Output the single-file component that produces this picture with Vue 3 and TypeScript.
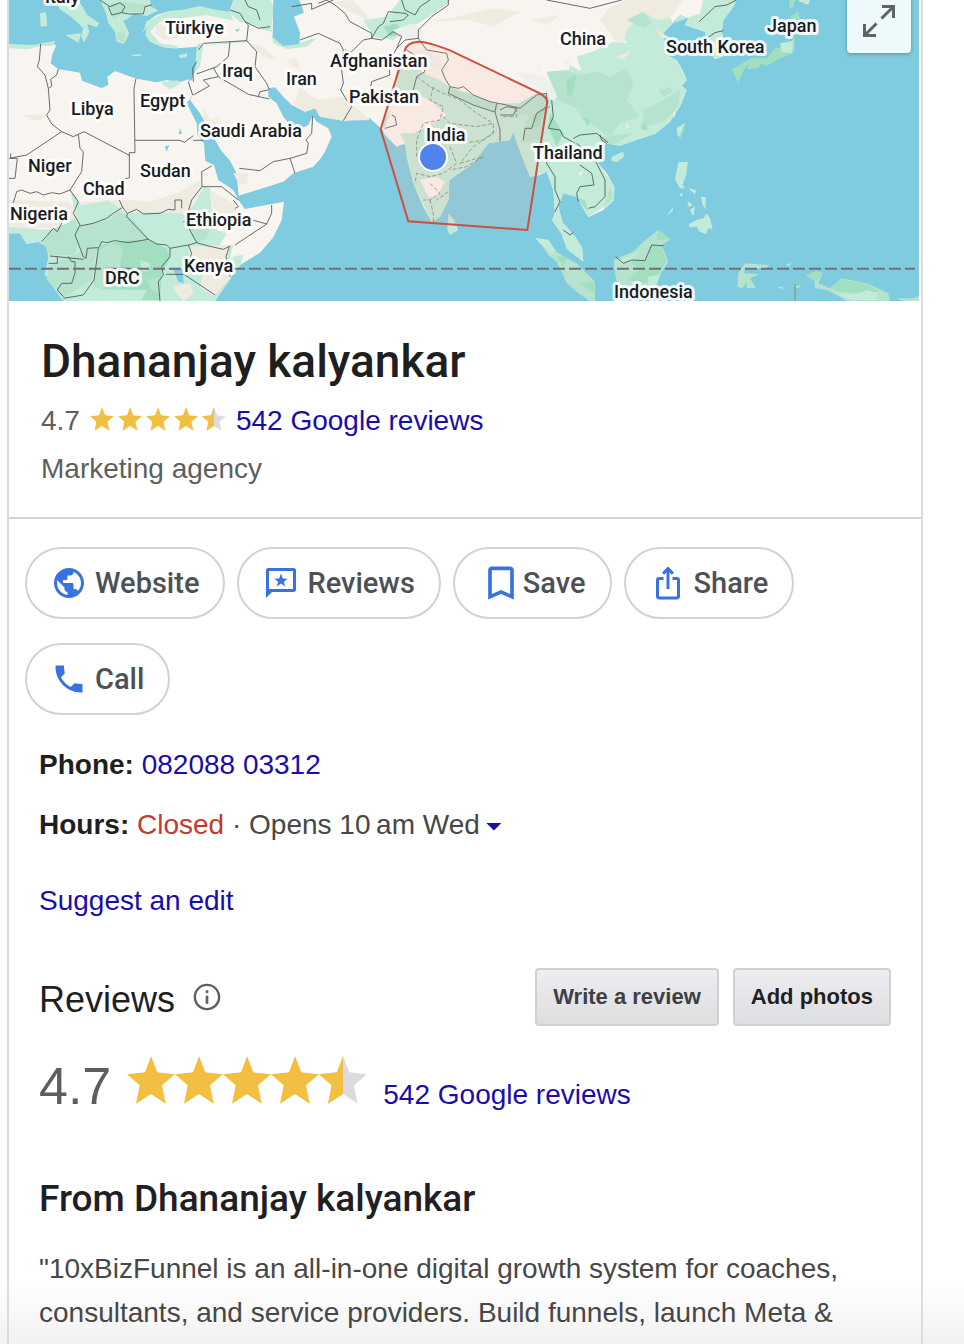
<script setup lang="ts">
import { ref } from 'vue'

interface MapLabel {
  name: string
  x: number
  y: number
}

interface Action {
  id: string
  label: string
  wide?: boolean
}

const labels: MapLabel[] = [
  { name: 'Italy', x: 45, y: 3 },
  { name: 'Türkiye', x: 165, y: 34 },
  { name: 'Iraq', x: 222, y: 77 },
  { name: 'Iran', x: 286, y: 85 },
  { name: 'Libya', x: 71, y: 115 },
  { name: 'Egypt', x: 140, y: 107 },
  { name: 'Saudi Arabia', x: 200, y: 137 },
  { name: 'Niger', x: 28, y: 172 },
  { name: 'Sudan', x: 140, y: 177 },
  { name: 'Chad', x: 83, y: 195 },
  { name: 'Nigeria', x: 10, y: 220 },
  { name: 'Ethiopia', x: 186, y: 226 },
  { name: 'Kenya', x: 184, y: 272 },
  { name: 'DRC', x: 105, y: 284 },
  { name: 'Afghanistan', x: 330, y: 67 },
  { name: 'Pakistan', x: 349, y: 103 },
  { name: 'China', x: 560, y: 45 },
  { name: 'India', x: 426, y: 141 },
  { name: 'Thailand', x: 533, y: 159 },
  { name: 'South Korea', x: 666, y: 53 },
  { name: 'Japan', x: 767, y: 32 },
  { name: 'Indonesia', x: 614, y: 298 },
]

const actions: Action[] = [
  { id: 'website', label: 'Website' },
  { id: 'reviews', label: 'Reviews' },
  { id: 'save', label: 'Save', wide: true },
  { id: 'share', label: 'Share' },
  { id: 'call', label: 'Call' },
]

const star = 'M72 0L91 49L144 55L105 88L116 143L72 114L27 143L38 88L0 55L54 49Z'
const halfStar = 'M72 0V114L27 143L38 88L0 55L54 49Z'
const hoursOpen = ref(false)
</script>

<template>
  <main class="page">
    <article class="card">
      <div class="map">
        <svg class="map-art" viewBox="9 0 910 301" preserveAspectRatio="xMinYMin slice" role="img" aria-label="Map of the service area">
          <rect class="sea" x="9" y="0" width="2000" height="301" />
          <g transform="scale(.33333)">
            <!-- Europe -->
            <path class="green" d="M120 40L138 36 142 78 122 80ZM165 0H235L262 45 298 70 290 82 262 72 268 95 252 128 243 108 250 85 215 52 180 28ZM195 105L243 100 236 128ZM300 0H450L455 20 478 30 440 48 400 42 385 55 370 62 388 100 372 132 350 125 345 95 325 70 318 40Z" />
            <path class="mid" d="M330 10L375 5 440 15 420 38 370 35 340 60ZM350 95L375 98 372 128 352 118Z" />

            <!-- Africa -->
            <path class="land" d="M27 140L85 145 122 132 158 126 168 138 158 160 152 190 175 207 240 218 246 242 305 264 325 255 322 230 345 213 380 226 410 236 470 247 500 240 540 246 566 238 570 262 578 285 560 310 590 370 592 405 612 430 616 482 642 495 655 540 700 570 715 600 735 627 852 605 845 660 820 712 780 758 720 795 690 835 645 903H190L160 862 135 822 146 772 140 740 115 725 80 732 60 700H27Z" />
            <path class="green" d="M27 132L100 135 165 122 160 138 120 138 85 148 27 145ZM483 245L535 241 540 252 512 268 490 256ZM210 570L245 615 325 600 380 640 540 630 555 650 590 600 610 560 630 565 635 625 650 690 680 700 660 735 700 735 690 770 715 790 690 840 645 903H190L160 862 135 822 146 772 140 740 115 725 80 732 60 700H27V680L150 690 200 680 225 635Z" />
            <path class="sand" d="M27 600L200 605 230 625 225 655 150 685 27 680ZM245 605L380 600 450 605 540 575 600 540 608 570 560 640 380 635 325 602 245 615ZM70 345L105 345 140 340 125 360 95 360ZM565 740L690 735 680 780 720 760 690 835 640 890 600 860 610 810 575 820ZM630 570L700 610 715 640 670 700 645 650ZM520 860L570 850 580 880 550 903 530 880Z" />
            <path class="mid" d="M240 680L330 660 355 635 395 655 450 720 385 720 310 725 250 770 225 710ZM150 690L225 660 240 700 225 765 150 765 130 730ZM200 770L290 745 275 840 190 895 140 840 145 800ZM550 650L600 640 640 665 620 715 590 730Z" />
            <path class="deep" d="M300 735L390 720 450 722 500 745 510 775 485 820 480 900H425L440 870 300 868 285 800Z" />
            <path class="mid" d="M295 750L335 730 370 745 360 800 310 870 280 860ZM440 840L480 830 480 880 455 870Z" />
            <path class="green" d="M420 780L450 790 445 815 425 812ZM700 770L730 765 720 800 700 800Z" />
            <path class="sea" d="M520 808H550V850L535 845ZM495 440L508 435 500 455ZM540 385L546 402H536ZM370 838L378 845 372 856Z" />

            <!-- Asia -->
            <path class="land" d="M700 0L690 30 640 22 600 15 545 30 500 35 470 45 440 65 430 95 450 125 490 142 530 145 590 140 600 130 590 165 590 200 575 240 565 245 578 285 570 300 600 340 640 410 662 450 690 482 710 520 716 587 740 580 850 545 880 520 940 500 960 478 975 455 995 410 985 385 950 365 938 348 925 375 905 385 870 375 850 350 830 310 805 290 805 265 825 262 850 290 875 315 915 335 945 325 960 350 1030 362 1110 355 1142 385 1160 405 1190 440 1220 420 1220 470 1240 550 1270 620 1295 665 1320 650 1345 600 1348 540 1420 490 1465 430 1530 420 1540 395 1555 440 1590 530 1620 525 1640 515 1660 570 1665 640 1656 660 1684 700 1702 748 1750 785 1746 742 1724 708 1688 668 1675 620 1690 580 1730 590 1765 652 1810 630 1842 600 1843 560 1820 520 1795 490 1790 455 1820 430 1860 437 1900 420 1965 402 2010 365 2040 320 2060 270 2045 257 2060 240 2050 215 2030 180 2000 165 1990 100 2040 45 2065 55 2055 75 2115 95 2125 150 2145 178 2180 165 2175 130 2165 95 2170 60 2200 20 2210 0Z" />
            <path class="green" d="M700 0H812L825 30 815 65 815 95 790 90 750 70 720 65 690 40ZM430 95L440 65 500 35 600 15 690 30 700 62 620 45 540 55 480 65 450 95 480 130 535 138 530 146 490 142 450 125ZM590 140L740 120 745 125 610 138 600 200 585 215ZM815 105L850 130 890 132 925 120 950 115 920 140 860 148 820 130Z" />
            <path class="green" d="M1090 60L1160 50 1200 0H1350L1345 10 1280 55 1220 90 1180 120 1120 110ZM1190 210L1230 175 1270 220 1320 240 1360 270 1450 310 1560 310 1620 300 1650 285 1660 235 1700 230 1710 195 1745 215 1730 170 1790 150 1840 125 1880 130 1850 70 1890 50 1990 20 2020 70 1990 100 2000 165 2030 180 2060 240 2045 257 2060 270 2040 320 2010 365 1965 402 1860 437 1820 430 1790 455 1795 490 1843 560 1842 600 1765 652 1730 590 1690 580 1675 620 1688 668 1724 708 1746 742 1750 785 1702 748 1684 700 1656 660 1665 640 1660 570 1640 515 1590 530 1555 440 1540 395 1530 420 1465 430 1420 490 1348 540 1345 600 1320 650 1295 665 1240 550 1220 470 1215 435 1160 405 1145 370 1190 300Z" />
            <path class="green" d="M2020 70L2100 40 2110 0H2210L2200 20 2170 60 2165 95 2180 165 2145 178 2125 150 2115 95 2055 75 2065 55 2040 45Z" />
            <path class="land" d="M1180 305L1260 285 1300 310 1340 345 1300 370 1240 400 1200 400 1215 430 1190 440 1150 400ZM1260 540L1310 530 1335 545 1310 590 1285 590Z" />
            <path class="sand" d="M745 130L790 140 830 180 790 170ZM860 180L890 175 900 210 880 200ZM900 260L950 300 1030 290 1110 360 1030 362 960 350 945 325 915 335 880 315ZM610 320L630 360 660 350 650 375 680 400 615 400ZM700 520L745 520 740 555 715 550ZM1290 65L1400 60 1480 80 1560 35 1480 25 1350 55ZM1590 60L1680 45 1640 75ZM470 75L520 60 560 75 530 115 490 120 465 100ZM1800 60L1830 20 1880 0H2050L2010 55 1970 60 1930 35 1880 90 1870 130 1850 125ZM1968 88L2015 118 1985 112ZM1850 170L1895 150 1870 178ZM1000 5L1060 0 1120 70 1060 40Z" />
            <path class="mid" d="M1640 215L1700 210 1740 225 1790 215 1830 230 1880 205 1900 250 1880 300 1920 350 1860 370 1830 410 1770 370 1720 320 1670 300ZM1930 330L1990 300 2040 270 2035 320 1990 365 1920 385 1930 355ZM1975 270L2010 262 2018 275 1990 290ZM1600 300L1640 290 1640 330 1620 420 1560 430 1580 360ZM1790 410L1900 400 1840 435 1800 420ZM1830 560L1842 590 1810 630ZM1880 60L1930 35 1955 70 1930 85ZM1350 262L1420 285 1500 315 1490 338 1420 315 1345 280ZM1540 320L1610 280 1655 285 1640 320 1580 345 1540 345Z" />
            <path class="deep" d="M1600 345L1635 325 1620 375 1598 385ZM1650 340L1690 400 1670 440 1645 380ZM1700 240L1730 225 1715 290 1700 285ZM1925 375L1940 370 1942 390 1925 388ZM1150 80L1190 70 1210 100 1170 110ZM1730 595L1755 600 1765 635ZM1745 350L1770 360 1765 380Z" />
            <path class="snow" d="M1180 90L1240 70 1275 95 1260 120 1200 115ZM1550 215L1600 222 1650 240 1672 290 1655 305 1630 270 1580 245ZM1200 140L1280 150 1325 180 1320 210 1280 190ZM1610 190L1625 205 1615 210ZM1690 180L1710 170 1700 200ZM1735 520L1750 510 1740 530ZM1880 370L1888 380 1880 388ZM2020 340L2026 335 2024 355Z" />
            <path class="sea" d="M820 0H898L912 38 882 50 900 98 898 132 850 138 818 112ZM455 0H690L688 35 640 28 600 18 545 30 478 34 452 18ZM705 90L720 85 712 96ZM440 80L428 100 435 112Z" />

            <!-- Islands -->
            <path class="green" d="M1345 640L1362 660 1375 690 1350 705 1342 690ZM390 164L425 163 420 168 400 168ZM536 166L562 160 560 172 540 174ZM1835 470L1870 455 1872 470 1850 487 1835 482ZM2030 385L2055 368 2042 415 2032 405ZM2035 487L2063 485 2060 520 2048 555 2055 565 2040 565 2025 540ZM2065 565L2088 570 2085 583ZM2103 590L2118 592 2116 628 2108 615ZM2062 603L2078 614 2066 622ZM2070 630L2085 618 2080 650ZM2038 580L2050 582 2044 592ZM2067 672L2090 660 2110 655 2120 640 2130 655 2138 687 2125 685 2118 702 2098 695 2090 680 2068 682ZM1998 650L2020 620 2018 632ZM2395 0H2430L2425 14 2400 5Z" />
            <path class="deep" d="M2368 0H2385L2378 25 2368 22ZM2370 50L2395 35 2400 60 2385 75ZM2385 110L2360 140 2325 145 2300 175 2250 175 2210 200 2195 208 2215 248 2232 208 2250 190 2240 208 2275 205 2285 190 2300 198 2330 180 2365 165 2382 155ZM2055 370L2042 415 2036 412Z" />
            <path class="green" d="M2340 130L2380 122 2375 160 2345 155Z" />
            <path class="mid" d="M1605 713L1645 720 1670 755 1700 775 1730 790 1785 845V903H1770L1735 880 1700 850 1685 815 1670 785 1645 765 1625 735ZM1841 780L1900 755 1925 730 1975 690 2012 718 1985 735 2005 785 1985 815 1965 870 1855 865 1845 820ZM2215 820L2235 790 2305 795 2312 787 2300 805 2235 805 2232 820 2278 823 2250 835 2268 865H2240L2240 845 2228 865 2212 860ZM2418 825L2450 813 2468 820 2455 850 2490 865 2525 835 2600 850 2665 880 2670 903H2540L2510 885 2480 870 2445 865 2445 845ZM2690 895L2740 895 2775 880 2765 903H2710ZM2358 795L2374 787 2368 800ZM2330 862L2350 860 2348 868ZM2375 858L2405 856 2395 864ZM1885 835L1894 850 1888 855Z" />
            <path class="deep" d="M1890 785L1940 780 1955 735 1985 740 1998 785 1960 850 1880 840 1920 810ZM1975 690L2012 718 1970 720ZM2490 862L2525 838 2600 852 2640 875 2590 880 2520 875ZM2420 825L2450 815 2466 822 2450 845ZM1670 765L1700 775 1690 800ZM1740 850L1785 845 1780 880Z" />
            <path class="green" d="M1605 713L1645 720 1665 750 1660 765 1625 735ZM1845 785L1890 770 1920 750 1885 785ZM2500 880L2570 882 2600 870 2630 880 2630 900H2560ZM1945 830L1978 825 1965 865 1945 860Z" />

            <!-- Borders -->
            <path class="border" d="M122 132L118 180 112 200 135 225 145 265 150 330 140 345 155 372 185 395 80 465 27 475M175 207L170 225 152 238 155 258 146 265M185 395L220 410 235 403 252 395 390 467M235 403L240 445 250 455 245 515 210 570M408 236L402 265 405 458H388V533L365 540M405 421H540L553 427 580 407M580 421H610M32 460V475H52L45 535H27M40 608L50 575 65 570 90 580 110 575 130 585 155 578 180 582 210 570L235 605 220 640 240 675 225 705 250 770 258 775 262 745 295 743M358 600L368 622 340 640 320 655 280 670 240 678M368 622L382 640 380 650 445 718 385 728 345 722 320 728 305 725 295 745 282 840 250 885 190 895M382 640L410 628 430 642 480 640 505 628 525 630V600H545V625M550 665H556L590 728 625 738 670 748 690 738M606 560L575 600 560 650M606 560L605 515 635 498M606 560L665 560 715 600M700 600L715 620 705 625M445 718L470 732 500 735 510 745 565 735 590 728M565 735L575 760 560 800M510 745V770L485 800 490 825 475 845 480 903M497 823H552L645 885M688 740L678 770 690 830M125 725L160 685 172 695 190 660M150 768L250 778M146 790H172V768M205 770L215 785 225 785 225 820 215 850 185 850 172 870 190 890M757 660L800 672 815 640V615M705 735L800 672M595 150L610 130 740 122 770 155 765 200 800 250 808 270M690 125L685 170 650 200 590 222M640 203L655 230 745 283 808 297M655 230L610 240 628 258 580 285M590 185L578 205 580 245M565 245L578 285M775 290L780 275 805 270M718 505L780 512 820 485 870 475 920 460 925 430 918 420 935 400 938 348M870 475L885 520M735 65L745 75 740 122M735 65L775 85 810 80M690 30L720 40 735 65M325 20L335 45 365 38 388 42 430 42 435 20 455 15M300 0L330 20 360 8 375 20 365 38M875 20L935 10 935 28 1000 0M735 0L745 20 770 30 780 60M900 120L955 100 1020 130 1030 150 1025 210 1030 250 1022 270 1040 300 1055 320 1030 362M1035 150L1055 155 1090 120 1115 115 1135 80 1150 70 1165 35 1215 40 1225 45 1210 60 1170 65M955 10L980 0 1005 15 1035 40 1050 65 1115 100V115L1145 120 1180 95 1205 110 1190 145 1215 120 1255 115 1255 90 1295 50 1345 15 1345 0M1205 0L1215 30 1245 45 1260 20 1290 0M1190 145L1165 190 1170 225 1115 245 1110 270M1220 150L1260 175 1275 215 1250 230 1240 270M1255 115L1280 150 1340 160 1345 180 1325 210 1335 235 1350 260 1375 265 1390 260 1420 285 1470 305 1520 315 1560 325 1610 285 1640 280M1350 260L1345 280 1420 315 1480 335H1485L1490 310M1500 330L1520 320 1550 325 1540 345 1500 345M1640 280V320L1610 340 1595 385 1575 385 1570 420M1155 385L1190 375 1185 350 1175 345M1485 335L1500 390V425M1655 300L1660 350 1645 385 1680 390 1690 410 1725 430M1720 415L1740 405 1790 400 1825 428M1640 460L1640 490 1665 530 1665 570 1680 605 1665 635M1730 430L1765 460 1790 490 1815 540 1815 590 1785 620 1765 625M1740 495L1775 520 1782 555 1740 560 1730 580 1735 605M1690 690L1710 705 1720 698M1640 0L1770 25 1865 0M1800 405L1805 420 1820 430M2098 65L2145 20 2180 15 2210 0M2125 112L2145 98 2170 92M1847 770L1870 790 1895 780 1935 782 1955 735 1990 737" />
            <path class="state" d="M1250 230L1290 260 1330 280 1380 300 1430 340 1480 370M1300 260L1290 300 1330 320 1320 360 1270 370 1250 420 1250 470M1330 350L1350 370 1430 380 1480 370 1480 400 1420 440 1380 490M1350 440L1370 490 1330 520 1290 530 1250 520 1245 550M1390 430L1450 420 1490 390M1290 550L1320 580 1290 600 1270 600M1290 600L1300 640V665M1345 575L1310 600M1380 490L1450 470 1400 500 1350 510M1510 350H1550L1550 330M1610 340L1650 320" />
            <path class="meridian" d="M2385 853V903" />
            <path class="equator" d="M27 806H2745" />

            <path class="area" d="M1142 388L1213 155Q1218 128 1255 125 1280 124 1350 151L1620 280Q1640 292 1642 305L1582 690 1225 664Z" />
          </g>
          <circle class="pin" cx="433" cy="157" r="14" />
          <text v-for="label in labels" :key="label.name" class="map-label" :x="label.x" :y="label.y">{{ label.name }}</text>
        </svg>
        <button class="expand" type="button" aria-label="Expand map">
          <svg viewBox="0 0 32 32" aria-hidden="true">
            <path d="M19 1.5H30.500V13M29.500 2.500L18.500 13.500M1.500 19V30.500H13M2.500 29.500L13.500 18.500" />
          </svg>
        </button>
      </div>

      <header class="summary">
        <h1>Dhananjay kalyankar</h1>
        <div class="rating">
          <span>4.7</span>
          <span class="stars small" role="img" aria-label="4.7 out of 5 stars">
            <svg v-for="n in 5" :key="n" viewBox="0 0 144 144" aria-hidden="true">
              <path :d="star" :class="n < 5 ? 'gold' : 'empty'" />
              <path v-if="n === 5" :d="halfStar" class="gold" />
            </svg>
          </span>
          <a href="#reviews">542 Google reviews</a>
        </div>
        <p class="category">Marketing agency</p>
      </header>

      <div class="actions">
        <button v-for="action in actions" :key="action.id" class="chip" :class="{ flush: action.wide }" type="button">
          <svg v-if="action.id === 'website'" viewBox="0 0 24 24" aria-hidden="true">
            <path d="M12 2C6.480 2 2 6.480 2 12s4.480 10 10 10 10-4.480 10-10S17.520 2 12 2zm-1 17.930c-3.950-.49-7-3.850-7-7.930 0-.62.080-1.210.21-1.790L9 15v1c0 1.100.9 2 2 2v1.930zm6.900-2.540c-.26-.81-1-1.390-1.900-1.390h-1v-3c0-.55-.45-1-1-1H8v-2h2c.55 0 1-.45 1-1V7h2c1.100 0 2-.9 2-2v-.41c2.930 1.190 5 4.060 5 7.410 0 2.080-.8 3.970-2.100 5.390z" />
          </svg>
          <svg v-else-if="action.id === 'reviews'" viewBox="0 0 24 24" aria-hidden="true">
            <path fill-rule="evenodd" d="M20.500 2h-17C2.700 2 2 2.700 2 3.500V22l4-4h14.500c.8 0 1.500-.7 1.500-1.500v-13c0-.8-.7-1.500-1.500-1.500zM20 16H4V4h16v12z" />
            <path d="M12 5.700l1.200 3.300 3.200.1-2.500 2 .9 3.200-2.800-1.900-2.800 1.900.9-3.200-2.500-2 3.200-.1z" />
          </svg>
          <svg v-else-if="action.id === 'save'" viewBox="0 0 24 24" aria-hidden="true">
            <path d="M17 3H7c-1.100 0-2 .9-2 2v16l7-3 7 3V5c0-1.100-.9-2-2-2zm0 15l-5-2.180L7 18V5h10v13z" />
          </svg>
          <svg v-else-if="action.id === 'share'" viewBox="0 0 24 24" aria-hidden="true">
            <path d="M16 5l-1.420 1.420-1.590-1.590V16h-1.980V4.830L9.420 6.420 8 5l4-4 4 4zm4 5v11c0 1.100-.9 2-2 2H6c-1.110 0-2-.9-2-2V10c0-1.110.89-2 2-2h3v2H6v11h12V10h-3V8h3c1.100 0 2 .89 2 2z" />
          </svg>
          <svg v-else viewBox="0 0 24 24" aria-hidden="true">
            <path d="M21 15.460l-5.270-.61-2.520 2.520c-2.830-1.440-5.150-3.750-6.590-6.590l2.530-2.530L8.540 3H3.030C2.450 13.180 10.820 21.550 21 20.970v-5.510z" />
          </svg>
          <span>{{ action.label }}</span>
        </button>
      </div>

      <section class="details">
        <p><strong>Phone:</strong> <a href="tel:08208803312">082088 03312</a></p>
        <p><strong>Hours:</strong> <span class="closed">Closed</span> · Opens 10&#8239;am Wed<button class="caret" type="button" aria-label="Show opening hours" :aria-expanded="hoursOpen" @click="hoursOpen = !hoursOpen"></button></p>
        <p class="suggest"><a href="#edit">Suggest an edit</a></p>
      </section>

      <section id="reviews" class="reviews">
        <div class="reviews-head">
          <h2>Reviews</h2>
          <button class="info" type="button" aria-label="About reviews">
            <svg viewBox="0 0 24 24" aria-hidden="true">
              <path d="M11 7h2v2h-2zm0 4h2v6h-2zm1-9C6.480 2 2 6.480 2 12s4.480 10 10 10 10-4.480 10-10S17.520 2 12 2zm0 18.200c-4.520 0-8.200-3.680-8.200-8.200S7.480 3.800 12 3.800s8.200 3.680 8.200 8.200-3.680 8.200-8.200 8.200z" />
            </svg>
          </button>
          <div class="review-buttons">
            <button class="box-button muted" type="button">Write a review</button>
            <button class="box-button" type="button">Add photos</button>
          </div>
        </div>
        <div class="score">
          <span class="score-value">4.7</span>
          <span class="stars large" role="img" aria-label="4.7 out of 5 stars">
            <svg v-for="n in 5" :key="n" viewBox="0 0 144 144" aria-hidden="true">
              <path :d="star" :class="n < 5 ? 'gold' : 'empty'" />
              <path v-if="n === 5" :d="halfStar" class="gold" />
            </svg>
          </span>
          <a href="#all-reviews">542 Google reviews</a>
        </div>
      </section>

      <section class="about">
        <h2>From Dhananjay kalyankar</h2>
        <p>"10xBizFunnel is an all-in-one digital growth system for coaches, consultants, and service providers. Build funnels, launch Meta &amp;</p>
      </section>
    </article>
  </main>
</template>

<style>
body {
  margin: 0;
  background: #fff;
}
</style>

<style scoped>
.page {
  box-sizing: border-box;
  min-height: 100vh;
  display: flex;
  padding: 0 41px 0 7px;
  background: linear-gradient(to top, #f1f1f1, #fff 64px);
  color: #474747;
  font: 28px/44px "Liberation Sans", Arial, sans-serif;
}

.card {
  flex: 1;
  min-width: 0;
  border: solid #dadce0;
  border-width: 0 2px;
}

h1,
h2,
p {
  margin: 0;
}

a {
  color: #1a0dab;
  text-decoration: none;
}

button {
  font: inherit;
  cursor: pointer;
}

.map {
  position: relative;
  height: 301px;
  margin-right: 2px;
  overflow: hidden;
}

.map-art {
  display: block;
  width: 100%;
  height: 100%;
}

.sea { fill: #7fcce0; }
.land { fill: #f8f4ef; }
.sand { fill: #f0ebe1; }
.green { fill: #c3ebd9; }
.mid { fill: #b5e3ce; }
.deep { fill: #a1dfc0; }
.snow { fill: #eef0ef; }

.border,
.state,
.meridian,
.equator {
  fill: none;
  stroke: #4b5054;
  stroke-width: 2.500;
}

.state {
  stroke: #7b8581;
  stroke-dasharray: 12 6;
}

.meridian {
  stroke: #7fa898;
  stroke-width: 5;
}

.equator {
  stroke: #756d78;
  stroke-width: 6;
  stroke-dasharray: 36 12;
}

.area {
  fill: #ffaca0;
  fill-opacity: 0.15;
  stroke: #cb4f42;
  stroke-width: 6;
}

.pin {
  fill: #5083ec;
  stroke: #fff;
  stroke-width: 2;
}

.map-label {
  fill: #1b1c1f;
  stroke: #fff;
  stroke-opacity: 0.85;
  stroke-width: 6px;
  stroke-linejoin: round;
  paint-order: stroke;
  font: 500 18px Roboto, sans-serif;
}

.expand {
  position: absolute;
  top: -11px;
  right: 8px;
  width: 64px;
  height: 64px;
  padding: 16px;
  border: 0;
  border-radius: 4px;
  background: #eef9fb;
  box-shadow: 0 1px 4px rgba(0, 0, 0, 0.3);
}

.expand svg {
  display: block;
  fill: none;
  stroke: #5f6365;
  stroke-width: 3;
}

.summary {
  padding: 32px 32px 24px;
  border-bottom: 2px solid #d2d2d2;
  color: #5e5e5e;
}

.summary h1 {
  color: #1f1f1f;
  font: 500 46px/56px "Google Sans", Roboto, sans-serif;
}

.rating {
  display: flex;
  align-items: center;
  gap: 10px;
  height: 48px;
  margin-top: 8px;
}

.category {
  line-height: 48px;
}

.stars {
  display: flex;
}

.stars.small {
  gap: 4px;
  padding-bottom: 4px;
}

.stars svg {
  display: block;
  width: 24px;
  height: 24px;
}

.gold { fill: #f2bf42; }
.empty { fill: #dadce0; }

.actions {
  display: flex;
  flex-wrap: wrap;
  gap: 24px 12px;
  padding: 28px 16px 0;
}

.chip {
  display: flex;
  align-items: center;
  gap: 8px;
  height: 72px;
  padding: 0 24px;
  border: 2px solid #d2d2d2;
  border-radius: 36px;
  background: #fff;
  color: #4d5156;
  font: 500 29px/40px "Google Sans", Roboto, sans-serif;
}

.chip svg {
  width: 36px;
  height: 36px;
  fill: #3871e0;
}

.chip.flush {
  gap: 0;
}

.chip.flush svg {
  width: 44px;
  height: 44px;
}

.details {
  padding: 20px 30px 0;
  line-height: 60px;
}

.details strong {
  color: #1f1f1f;
}

.closed {
  color: #c5392e;
}

.caret {
  width: 16px;
  height: 8px;
  margin-left: 6px;
  padding: 0;
  border: 0;
  background: #1a0dab;
  clip-path: polygon(0 0, 100% 0, 50% 100%);
  vertical-align: middle;
}

.suggest {
  margin-top: 16px;
}

.reviews {
  padding: 37px 30px 0;
}

.reviews-head {
  display: flex;
  align-items: center;
}

.reviews h2 {
  padding-top: 6px;
  color: #1f1f1f;
  font-size: 36px;
  font-weight: 400;
}

.info {
  margin-left: 16px;
  padding: 0;
  border: 0;
  background: none;
}

.info svg {
  display: block;
  width: 32px;
  height: 32px;
  fill: #5e5e5e;
}

.review-buttons {
  display: flex;
  gap: 14px;
  margin-left: auto;
}

.box-button {
  height: 58px;
  padding: 0 16px;
  border: 2px solid #d0d0d0;
  border-radius: 4px;
  background: linear-gradient(#eeedf2, #dddee0);
  color: #1f1f1f;
  font-size: 22px;
  font-weight: 700;
}

.box-button.muted {
  color: #3c4043;
}

.score {
  display: flex;
  align-items: baseline;
  gap: 16px;
  margin-top: 30px;
}

.score-value {
  color: #5e5e5e;
  font-size: 52px;
  line-height: 60px;
}

.stars.large svg {
  width: 48px;
  height: 48px;
}

.about {
  padding: 58px 30px 10px;
}

.about h2 {
  margin-bottom: 24px;
  color: #1f2023;
  font: 500 37px/48px "Google Sans", Roboto, sans-serif;
}
</style>
